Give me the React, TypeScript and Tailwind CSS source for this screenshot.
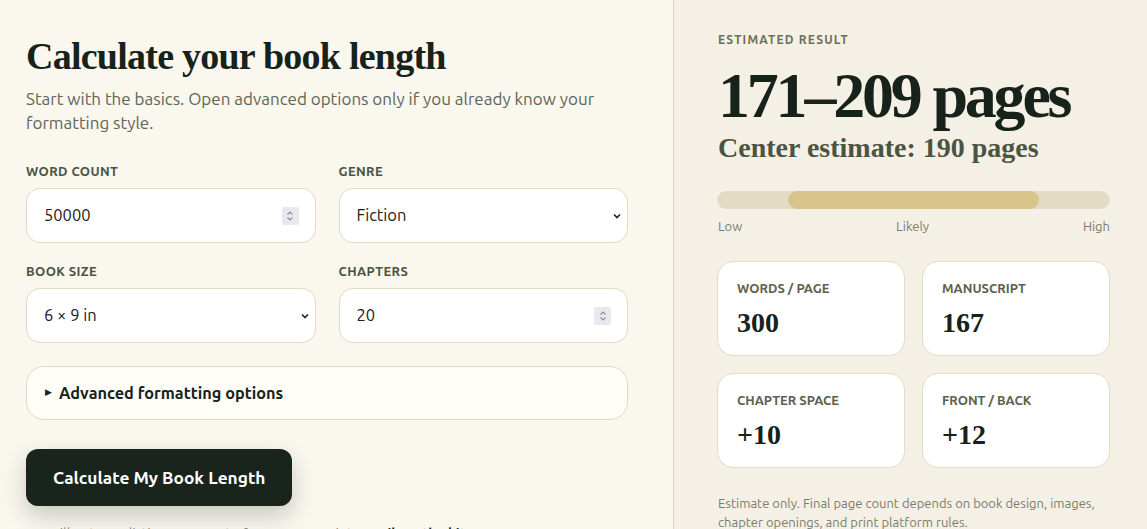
import React from "react";

const sans = "font-['Ubuntu','Noto_Sans','Open_Sans',sans-serif]";
const serif = "font-['Liberation_Serif','Times_New_Roman',serif]";

function Field({ label, children }: { label: string; children: React.ReactNode }) {
    return (
        <div className="flex flex-col gap-[9px]">
            <label className="text-[13px] font-bold uppercase leading-[16px] tracking-[0.03em] text-[#4b5442]">
                {label}
            </label>
            {children}
        </div>
    );
}

function NumberBox({ value }: { value: string }) {
    return (
        <div className="flex h-[55px] items-center justify-between rounded-[14px] border border-[#e3d9c3] bg-white pl-[17px] pr-[16px] text-[16.5px] text-[#1c211b]">
            <span>{value}</span>
            {/* fake spin button */}
            <span className="flex h-[18px] w-[17px] items-center justify-center rounded-[2px] bg-[#e9e8ee]">
                <svg width="8" height="12" viewBox="0 0 8 12" fill="none" stroke="#8c8c96" strokeWidth="1.1">
                    <path d="M1.5 4.5 L4 2 L6.5 4.5" />
                    <path d="M1.5 7.5 L4 10 L6.5 7.5" />
                </svg>
            </span>
        </div>
    );
}

function SelectBox({ value }: { value: string }) {
    return (
        <div className="flex h-[55px] items-center justify-between rounded-[14px] border border-[#e3d9c3] bg-white pl-[17px] pr-[5px] text-[16.5px] text-[#1c211b]">
            <span>{value}</span>
            <svg width="10" height="8" viewBox="0 0 10 8" fill="none" stroke="#222" strokeWidth="1.6">
                <path d="M2 2.5 L5 5.5 L8 2.5" />
            </svg>
        </div>
    );
}

const stats = [
    { label: "Words / page", value: "300" },
    { label: "Manuscript", value: "167" },
    { label: "Chapter space", value: "+10" },
    { label: "Front / back", value: "+12" },
];

export default function App() {
    return (
        <div className={`flex h-[529px] w-full overflow-hidden ${sans}`}>
            {/* Left: form */}
            <div className="w-[673px] shrink-0 bg-[#faf7ef] pl-[26px] pr-[45px] pt-[34px]">
                <h1 className={`${serif} text-[38px] font-bold leading-[44px] tracking-[-0.02em] text-[#16221a]`}>
                    Calculate your book length
                </h1>
                <p className="mt-[9px] max-w-[600px] text-[17px] leading-[24px] text-[#5f6656]">
                    Start with the basics. Open advanced options only if you already know your formatting style.
                </p>

                <div className="mt-[28px] grid w-[602px] grid-cols-2 gap-x-[23px] gap-y-[20px]">
                    <Field label="Word count">
                        <NumberBox value="50000" />
                    </Field>
                    <Field label="Genre">
                        <SelectBox value="Fiction" />
                    </Field>
                    <Field label="Book size">
                        <SelectBox value="6 × 9 in" />
                    </Field>
                    <Field label="Chapters">
                        <NumberBox value="20" />
                    </Field>
                </div>

                <div className="mt-[23px] flex h-[54px] w-[602px] items-center rounded-[18px] border border-[#e3d9c3] bg-[#fffdf7] px-[18px]">
                    <span className="mr-[7px] text-[9px] text-[#1c211b]">▶</span>
                    <span className="text-[16.3px] font-bold text-[#16221a]">Advanced formatting options</span>
                </div>

                <button className="mt-[29px] h-[57px] rounded-[12px] bg-[#18241c] px-[27px] text-[17.3px] font-bold text-white shadow-[0_10px_24px_rgba(24,36,28,0.22)]">
                    Calculate My Book Length
                </button>

                <p className="mt-[18px] pl-[10px] text-[14px] leading-[20px] text-[#8a8b7c]">
                    You'll get a realistic page count of your manuscript. <b className="text-[#16221a]">Email me the kit</b>
                </p>
            </div>

            {/* Right: result panel */}
            <div className="flex-1 border-l border-[#e1d4bb] bg-[#f5f0e5] pl-[43px] pr-[37px] pt-[32px]">
                <div className="pl-[1px] text-[12px] font-bold uppercase leading-[16px] tracking-[0.1em] text-[#6b705d]">
                    Estimated result
                </div>
                <div className={`${serif} mt-[16px] pl-[1px] text-[64px] font-bold leading-[64px] tracking-[-0.05em] text-[#16221a]`}>
                    171–209 pages
                </div>
                <div className={`${serif} mt-[3px] pl-[1px] text-[28px] font-bold leading-[34px] text-[#4b5442]`}>
                    Center estimate: 190 pages
                </div>

                <div className="relative mt-[26px] h-[18px] w-full rounded-full bg-[#e3dbc4]">
                    <div className="absolute left-[18%] top-0 h-[18px] w-[64%] rounded-full bg-[#d9c48b]" />
                </div>
                <div className="mt-[8px] flex justify-between pl-[1px] text-[13px] leading-[18px] text-[#7c7d6e]">
                    <span>Low</span>
                    <span>Likely</span>
                    <span>High</span>
                </div>

                <div className="mt-[26px] grid grid-cols-2 gap-[17px]">
                    {stats.map((s) => (
                        <div key={s.label} className="h-[95px] rounded-[16px] border border-[#e5dbc6] bg-white px-[19px] pt-[16px]">
                            <div className="text-[13px] font-bold uppercase leading-[20px] text-[#5d624f]">{s.label}</div>
                            <div className={`${serif} mt-[8px] text-[28px] font-bold leading-[34px] text-[#16221a]`}>
                                {s.value}
                            </div>
                        </div>
                    ))}
                </div>

                <p className="mt-[26px] pl-[1px] text-[13px] leading-[19px] text-[#7b7c6c]">
                    Estimate only. Final page count depends on book design, images, chapter openings, and print platform rules.
                </p>
            </div>
        </div>
    );
}
